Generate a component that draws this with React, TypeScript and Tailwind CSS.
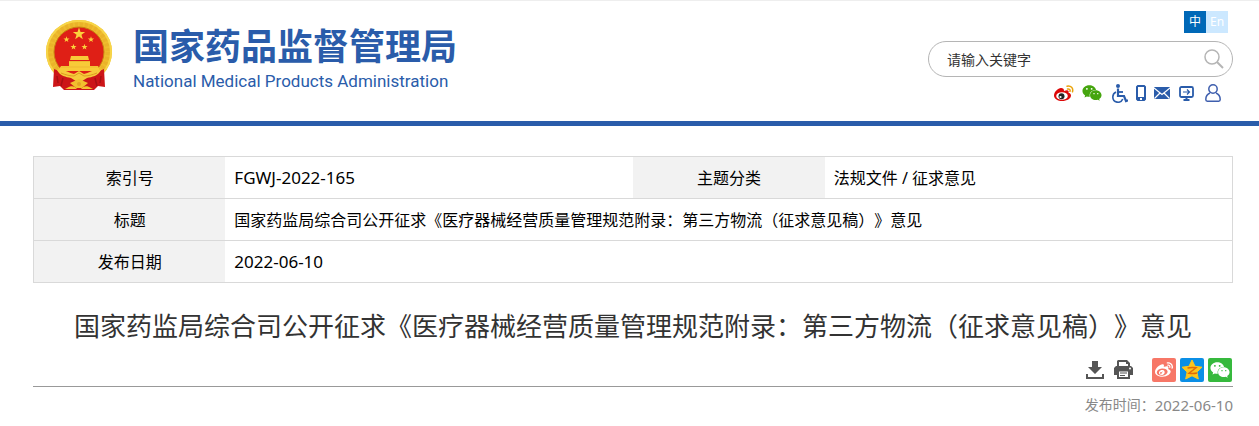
import { useState } from 'react'
import { FaWeixin, FaWeibo } from 'react-icons/fa'

const TITLE = '国家药监局综合司公开征求《医疗器械经营质量管理规范附录：第三方物流（征求意见稿）》意见'
const DATE = '2022-06-10'

const star = (cx: number, cy: number, r: number) =>
  Array.from({ length: 10 }, (_, i) => {
    const a = (Math.PI / 5) * i - Math.PI / 2
    const d = i % 2 ? r * 0.4 : r
    return `${(cx + d * Math.cos(a)).toFixed(2)},${(cy + d * Math.sin(a)).toFixed(2)}`
  }).join(' ')

function Emblem() {
  return (
    <svg width="68" height="72" viewBox="0 0 68 72" aria-hidden="true">
      <ellipse cx="34" cy="33" rx="33" ry="32" fill="#efbc2e" />
      <ellipse cx="34" cy="33" rx="29" ry="28" fill="none" stroke="#dda01f" strokeWidth="5" strokeDasharray="3 2" opacity=".3" />
      <ellipse cx="34" cy="33" rx="32" ry="31" fill="none" stroke="#f7d548" strokeWidth="2" />
      <circle cx="34" cy="33" r="25" fill="#df1f16" stroke="#c98312" />
      <polygon points={star(34, 15, 6.5)} fill="#fbd23c" />
      <polygon points={star(21.5, 20.5, 3.2)} fill="#fbd23c" />
      <polygon points={star(46, 20.5, 3.2)} fill="#fbd23c" />
      <polygon points={star(28.5, 28, 3.2)} fill="#fbd23c" />
      <polygon points={star(39.5, 28, 3.2)} fill="#fbd23c" />
      <path d="M26 37h17l1 4H25zM24 42h21v5h8l2 5H13l3-5h8z" fill="#f8cb38" />
      <path d="M24 42.500h21M16 48h37" stroke="#efb930" />
      <path d="M9 50l-1 18 7-1 4 4h30l4-4 7 1-1-18-14 6H24z" fill="#cc1518" />
      <path d="M12 57l1 7M18 59l-2 8M56 57l-1 7M50 59l2 8" stroke="#a81013" strokeWidth="1.500" />
      <path d="M12 51c7-1 12 3 17 4l5-3 5 3c5-1 10-5 17-4-3 6-9 7-14 8l-8 5-8-5c-5-1-11-2-14-8z" fill="#f6ca3b" />
      <path d="M16 54c5 2 9 3 13 3l5-3 5 3c4 0 8-1 13-3" fill="none" stroke="#dd9c22" />
      <path d="M25 64l9-4 9 4-6 5h-6z" fill="#f2bf2e" />
      <path d="M22 69c4-3 8-2 10 1H20zM46 69c-4-3-8-2-10 1h12z" fill="#f4c431" />
      <circle cx="34" cy="65" r="2" fill="#e3a524" />
    </svg>
  )
}

function WeiboColor() {
  return (
    <svg width="20" height="16" viewBox="0 0 20 16" aria-hidden="true">
      <path d="M7 3C4 3 0 7 0 10.500C0 14 4 16 8 16c5 0 9-2.500 9-5.500 0-1.800-1.500-2.500-2.500-2.800.7-2-.4-3.200-4.500-1.700C10.300 4 9 3 7 3z" fill="#dd0808" />
      <ellipse cx="8" cy="11" rx="5.800" ry="3.800" fill="#fff" />
      <circle cx="7.500" cy="11.200" r="3" fill="#222" />
      <circle cx="6.500" cy="12" r="1.100" fill="#fff" />
      <path d="M13 1.200c4-.8 6.500 2 5.500 5.500M13.500 4c2-.3 3 .7 2.500 2.300" fill="none" stroke="#eaa30a" strokeWidth="1.500" strokeLinecap="round" />
    </svg>
  )
}

function Wheelchair() {
  return (
    <svg width="16" height="19" viewBox="0 0 16 19" fill="none" stroke="#2a5caa" aria-hidden="true">
      <circle cx="6" cy="2" r="2" fill="#2a5caa" stroke="none" />
      <path d="M6 4.500V12h6l2 5 2-.8" strokeWidth="2.200" />
      <path d="M6 8h5" strokeWidth="1.800" />
      <path d="M4 8C1.500 9.200.8 11.200.8 13a5.200 5.200 0 0 0 10 2" strokeWidth="1.600" />
    </svg>
  )
}

function Phone() {
  return (
    <svg width="10" height="16" viewBox="0 0 10 16" aria-hidden="true">
      <path fillRule="evenodd" d="M1.500 0h7L10 1.500v13L8.500 16h-7L0 14.500v-13zM2 2v10h6V2zM4 13v2h2v-2z" fill="#2a5caa" />
    </svg>
  )
}

function Mail() {
  return (
    <svg width="16" height="12" viewBox="0 0 16 12" aria-hidden="true">
      <rect width="16" height="12" rx="1" fill="#2a5caa" />
      <path d="M0 1l8 6.500L16 1M.5 11.500L6 6M15.500 11.500L10 6" fill="none" stroke="#fff" strokeWidth="1.200" />
    </svg>
  )
}

function Screen() {
  return (
    <svg width="15" height="15" viewBox="0 0 15 15" fill="none" stroke="#2a5caa" aria-hidden="true">
      <rect x="1" y="1" width="13" height="10" rx="1.500" strokeWidth="1.800" />
      <path d="M4 6h6M8 3.500L10.500 6 8 8.500" strokeWidth="1.200" />
      <path d="M7.500 11v3M4.500 14h6" strokeWidth="2" />
    </svg>
  )
}

function Person() {
  return (
    <svg width="16" height="18" viewBox="0 0 16 18" fill="none" stroke="#3f5fae" strokeWidth="1.500" aria-hidden="true">
      <circle cx="8" cy="5" r="4.200" />
      <path d="M5 9C2.500 10 .8 12.500.8 15.500c0 1.200.5 1.700 1.500 1.700h11.400c1 0 1.500-.5 1.500-1.700C15.200 12.500 13.500 10 11 9" />
    </svg>
  )
}

function Download() {
  return (
    <svg width="18" height="18" viewBox="0 0 18 18" fill="#555" aria-hidden="true">
      <path d="M6 0h6v6h4l-7 7-7-7h4z" />
      <path d="M0 13h2v3h14v-3h2v5H0z" />
    </svg>
  )
}

function Printer() {
  return (
    <svg width="19" height="19" viewBox="0 0 19 19" aria-hidden="true">
      <path fillRule="evenodd" d="M3 1l1-1h9l3 3v3H3zM5 2v4h9V4h-2V2z" fill="#555" />
      <path d="M2 6h15l2 2v7h-3v-4H3v4H0V8z" fill="#555" />
      <path d="M4 10.500h11V18H4z" fill="#fff" stroke="#555" strokeWidth="2" />
      <path d="M6 13h7M6 15.500h5" stroke="#555" strokeWidth="1.200" />
      <circle cx="16" cy="8.500" r="1" fill="#fff" />
    </svg>
  )
}

function Qzone() {
  return (
    <svg width="22" height="22" viewBox="0 0 22 22" aria-hidden="true">
      <path d="M11 1l3 6.300 7 .9-5.100 4.800 1.400 7L11 16.800 4.700 20l1.400-7L1 8.200l7-.9z" fill="#fdc51c" stroke="#fdc51c" strokeLinejoin="round" />
      <path d="M6.500 9c3-.6 6-.6 8.500-.2l-7 5.400c3 .5 5.500.4 8-.2" fill="none" stroke="#e26a08" strokeWidth="1.500" />
    </svg>
  )
}

const SHORTCUTS = [
  { label: '微博', icon: <WeiboColor />, className: 'mr-2 w-5' },
  { label: '微信', icon: <FaWeixin size={20} color="#45a50e" />, className: 'mr-[10px] w-5' },
  { label: '无障碍', icon: <Wheelchair />, className: 'mr-2 w-4' },
  { label: '手机版', icon: <Phone />, className: 'mr-2 w-[10px]' },
  { label: '邮箱', icon: <Mail />, className: 'mr-2 w-4' },
  { label: '客户端', icon: <Screen />, className: 'mr-[11px] w-4' },
  { label: '个人中心', icon: <Person />, className: 'w-4' },
]

function Header() {
  const [keyword, setKeyword] = useState('')

  return (
    <header className="flex h-[126px] items-start justify-between border-t border-b-[5px] border-t-[#eee] border-b-[#2a5caa] pr-[26px] pl-[45px]">
      <a href="#" className="mt-[18px] flex items-start gap-5 text-[#2a5caa]">
        <Emblem />
        <span className="flex flex-col pt-1">
          <span className="text-[36px] leading-[48px] font-bold">国家药品监督管理局</span>
          <span className="font-[Roboto] text-[17px] leading-5">
            National Medical Products Administration
          </span>
        </span>
      </a>

      <div className="mt-[10px] flex flex-col items-end">
        <div className="mr-[5px] flex text-[12px] leading-[22px] text-white">
          <button type="button" className="h-[22px] w-[22px] bg-[#0068b7]">中</button>
          <button type="button" className="h-[22px] w-[22px] bg-[#cce8ff]">En</button>
        </div>
        <form className="mt-2 flex h-9 w-[305px] items-center rounded-full border border-[#b5b5b5] pr-2 pl-[18px]">
          <input
            type="text"
            aria-label="请输入关键字"
            placeholder="请输入关键字"
            value={keyword}
            onChange={(e) => setKeyword(e.target.value)}
            className="min-w-0 flex-1 text-[14px] outline-none placeholder:text-[#333]"
          />
          <button type="button" aria-label="搜索">
            <svg width="20" height="20" viewBox="0 0 20 20" fill="none" stroke="#b5b5b5" strokeWidth="1.500">
              <circle cx="8" cy="8" r="7" />
              <path d="M13 13l6 6" strokeWidth="2" />
            </svg>
          </button>
        </form>
        <nav className="mt-[6px] mr-3 flex h-5 items-center">
          {SHORTCUTS.map((s) => (
            <a key={s.label} href="#" aria-label={s.label} className={`flex justify-center ${s.className}`}>
              {s.icon}
            </a>
          ))}
        </nav>
      </div>
    </header>
  )
}

function InfoTable() {
  const th = 'w-[16%] bg-[#f2f2f2] font-normal'
  const td = 'px-[9px]'

  return (
    <table className="w-full table-fixed border-collapse border border-[#d9d9d9] text-[16px] leading-6 text-black">
      <tbody>
        <tr className="h-[42px] border-b border-[#d9d9d9]">
          <th scope="row" className={th}>索引号</th>
          <td className={`${td} w-[34%] text-[17px]`}>FGWJ-2022-165</td>
          <th scope="row" className={th}>主题分类</th>
          <td className={td}>法规文件 / 征求意见</td>
        </tr>
        <tr className="h-[42px] border-b border-[#d9d9d9]">
          <th scope="row" className={th}>标题</th>
          <td colSpan={3} className={td}>{TITLE}</td>
        </tr>
        <tr className="h-[42px]">
          <th scope="row" className={th}>发布日期</th>
          <td colSpan={3} className={`${td} text-[17px]`}>{DATE}</td>
        </tr>
      </tbody>
    </table>
  )
}

export default function App() {
  return (
    <div className="bg-white font-['Noto_Sans','Noto_Sans_CJK_SC',sans-serif] [text-spacing-trim:space-all]" lang="zh-CN">
      <Header />
      <main className="pt-[30px] pr-[26px] pb-2 pl-[33px]">
        <InfoTable />
        <h1 className="mt-[23px] text-center text-[26px] leading-10 text-[#333]">{TITLE}</h1>
        <div className="mt-[11px] flex h-[30px] items-start justify-end border-b border-[#999]">
          <div className="mt-[3px] mr-[19px] flex gap-[10px]">
            <button type="button" aria-label="下载"><Download /></button>
            <button type="button" aria-label="打印"><Printer /></button>
          </div>
          <div className="mt-px mr-px flex gap-1">
            <a href="#" aria-label="分享到微博" className="flex h-6 w-6 items-center justify-center rounded-xs bg-[#f77767]">
              <FaWeibo size={18} color="#fff" />
            </a>
            <a href="#" aria-label="分享到QQ空间" className="flex h-6 w-6 items-center justify-center rounded-xs bg-[#0b8fe6]">
              <Qzone />
            </a>
            <a href="#" aria-label="分享到微信" className="flex h-6 w-6 items-center justify-center rounded-xs bg-[#36b93d]">
              <FaWeixin size={20} color="#fff" />
            </a>
          </div>
        </div>
        <p className="mt-[6px] flex justify-end text-[14px] leading-6 text-[#888]">
          发布时间：<time className="text-[15px]">{DATE}</time>
        </p>
      </main>
    </div>
  )
}
